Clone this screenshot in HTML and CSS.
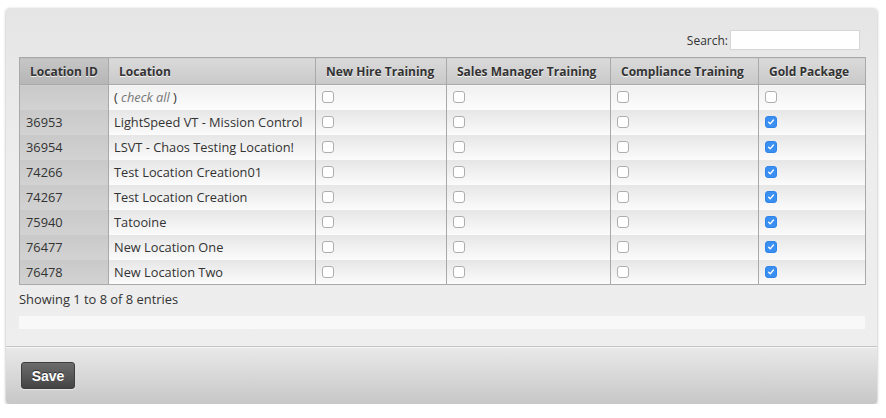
FILE: index.html
```html
<!DOCTYPE html>
<html>
<head>
<meta charset="utf-8">
<link rel="stylesheet" href="styles.css">
</head>
<body>
<div class="panel">
  <div class="panel-body">
    <div class="search-row">
      <label class="search-label">Search:<input class="search-input" type="text"></label>
    </div>
    <table class="grid">
      <colgroup>
        <col class="c1"><col class="c2"><col class="c3"><col class="c4"><col class="c5"><col class="c6">
      </colgroup>
      <thead>
        <tr>
          <th class="sorted">Location ID</th>
          <th>Location</th>
          <th>New Hire Training</th>
          <th>Sales Manager Training</th>
          <th>Compliance Training</th>
          <th>Gold Package</th>
        </tr>
      </thead>
      <tbody>
        <tr>
          <td class="id"></td>
          <td>( <span class="checkall">check all</span> )</td>
          <td><span class="cb"></span></td>
          <td><span class="cb"></span></td>
          <td><span class="cb"></span></td>
          <td><span class="cb"></span></td>
        </tr>
        <tr>
          <td class="id">36953</td><td>LightSpeed VT - Mission Control</td>
          <td><span class="cb"></span></td><td><span class="cb"></span></td><td><span class="cb"></span></td>
          <td><span class="cb on"><svg viewBox="0 0 12 12"><path d="M3.2 6.3 L5.1 8.2 L8.9 3.6" fill="none" stroke="#fff" stroke-width="1.6" stroke-linecap="round" stroke-linejoin="round"/></svg></span></td>
        </tr>
        <tr>
          <td class="id">36954</td><td>LSVT - Chaos Testing Location!</td>
          <td><span class="cb"></span></td><td><span class="cb"></span></td><td><span class="cb"></span></td>
          <td><span class="cb on"><svg viewBox="0 0 12 12"><path d="M3.2 6.3 L5.1 8.2 L8.9 3.6" fill="none" stroke="#fff" stroke-width="1.6" stroke-linecap="round" stroke-linejoin="round"/></svg></span></td>
        </tr>
        <tr>
          <td class="id">74266</td><td>Test Location Creation01</td>
          <td><span class="cb"></span></td><td><span class="cb"></span></td><td><span class="cb"></span></td>
          <td><span class="cb on"><svg viewBox="0 0 12 12"><path d="M3.2 6.3 L5.1 8.2 L8.9 3.6" fill="none" stroke="#fff" stroke-width="1.6" stroke-linecap="round" stroke-linejoin="round"/></svg></span></td>
        </tr>
        <tr>
          <td class="id">74267</td><td>Test Location Creation</td>
          <td><span class="cb"></span></td><td><span class="cb"></span></td><td><span class="cb"></span></td>
          <td><span class="cb on"><svg viewBox="0 0 12 12"><path d="M3.2 6.3 L5.1 8.2 L8.9 3.6" fill="none" stroke="#fff" stroke-width="1.6" stroke-linecap="round" stroke-linejoin="round"/></svg></span></td>
        </tr>
        <tr>
          <td class="id">75940</td><td>Tatooine</td>
          <td><span class="cb"></span></td><td><span class="cb"></span></td><td><span class="cb"></span></td>
          <td><span class="cb on"><svg viewBox="0 0 12 12"><path d="M3.2 6.3 L5.1 8.2 L8.9 3.6" fill="none" stroke="#fff" stroke-width="1.6" stroke-linecap="round" stroke-linejoin="round"/></svg></span></td>
        </tr>
        <tr>
          <td class="id">76477</td><td>New Location One</td>
          <td><span class="cb"></span></td><td><span class="cb"></span></td><td><span class="cb"></span></td>
          <td><span class="cb on"><svg viewBox="0 0 12 12"><path d="M3.2 6.3 L5.1 8.2 L8.9 3.6" fill="none" stroke="#fff" stroke-width="1.6" stroke-linecap="round" stroke-linejoin="round"/></svg></span></td>
        </tr>
        <tr>
          <td class="id">76478</td><td>New Location Two</td>
          <td><span class="cb"></span></td><td><span class="cb"></span></td><td><span class="cb"></span></td>
          <td><span class="cb on"><svg viewBox="0 0 12 12"><path d="M3.2 6.3 L5.1 8.2 L8.9 3.6" fill="none" stroke="#fff" stroke-width="1.6" stroke-linecap="round" stroke-linejoin="round"/></svg></span></td>
        </tr>
      </tbody>
    </table>
    <div class="info">Showing 1 to 8 of 8 entries</div>
    <div class="pager-bar"></div>
  </div>
  <div class="panel-footer">
    <button class="btn-save" type="button">Save</button>
  </div>
</div>
</body>
</html>
```
FILE: styles.css
```css
* { box-sizing: border-box; }
html, body { margin: 0; padding: 0; background: #fff; }
body {
  font-family: "Open Sans", "DejaVu Sans", sans-serif;
  font-size: 12px;
  color: #333;
  padding: 8px 9px 0 6px;
}
.panel {
  width: 871px;
  border-radius: 4px;
  background: linear-gradient(#e5e5e5, #ededed 40%, #eeeeee);
  box-shadow: 0 1px 3px rgba(0,0,0,0.35);
  overflow: hidden;
}
.panel-body {
  padding: 22px 12px 0 13px;
}
.search-row {
  display: flex;
  justify-content: flex-end;
  height: 20px;
  margin-bottom: 7px;
}
.search-label {
  display: flex;
  align-items: center;
  color: #333;
  font-size: 12px;
  padding-right: 5px;
}
.search-input {
  width: 130px;
  height: 20px;
  margin: 0 0 0 2px;
  border: 1px solid #d6d6d6;
  background: #fff;
  padding: 0 3px;
  outline: none;
}
.grid {
  width: 846px;
  border-collapse: collapse;
  table-layout: fixed;
  border: 1px solid #a9a9a9;
}
.c1 { width: 89px; }
.c2 { width: 207px; }
.c3 { width: 131px; }
.c4 { width: 164px; }
.c5 { width: 148px; }
.c6 { width: 107px; }
.grid th {
  height: 27px;
  padding: 0 10px;
  text-align: left;
  font-weight: 700;
  font-size: 12px;
  color: #333;
  text-shadow: 0 1px 0 rgba(255,255,255,0.8);
  background: linear-gradient(#dadada, #c9c9c9);
  border: 1px solid #a9a9a9;
  white-space: nowrap;
}
.grid th.sorted {
  background: linear-gradient(#c6c6c6, #b6b6b6);
}
.grid td {
  height: 25px;
  padding: 0 6px 0 5px;
  font-size: 12.8px;
  color: #333;
  background: linear-gradient(#e6e6e6, #fbfbfb);
  border-left: 1px solid #a9a9a9;
  border-right: 1px solid #a9a9a9;
  white-space: nowrap;
  vertical-align: middle;
}
.grid td .cb { margin-left: 1px; }
.grid tbody tr:first-child td {
  background: linear-gradient(#f0f0f0, #fdfdfd);
}
.grid td.id,
.grid tbody tr:first-child td.id {
  background: linear-gradient(#c9c9c9, #d2d2d2);
  padding-left: 6px;
}
.checkall {
  font-style: italic;
  color: #777;
}
.cb {
  display: block;
  width: 12px;
  height: 12px;
  border: 1px solid #aeaeae;
  border-radius: 3px;
  background: #fff;
}
.cb.on {
  border-color: #2f84ea;
  background: #3a8ff3;
}
.cb svg {
  display: block;
  width: 10px;
  height: 10px;
}
.info {
  margin-top: 5px;
  height: 18px;
  line-height: 18px;
  font-size: 12.9px;
  color: #333;
}
.pager-bar {
  margin-top: 8px;
  height: 13px;
  background: #f8f8f8;
  margin-bottom: 17px;
}
.panel-footer {
  border-top: 1px solid #c4c4c4;
  box-shadow: inset 0 1px 0 #f6f6f6;
  background: linear-gradient(#e9e9e9, #c7c7c7);
  padding: 15px 0 15px 15px;
  height: 58px;
}
.btn-save {
  width: 54px;
  height: 27px;
  border: 1px solid #3e3e3e;
  border-radius: 3px;
  background: linear-gradient(#6c6c6c, #444444);
  color: #fff;
  font-family: "Liberation Sans", Arial, sans-serif;
  font-weight: 700;
  font-size: 14px;
  text-shadow: 0 -1px 0 rgba(0,0,0,0.5);
  box-shadow: 0 1px 1px rgba(255,255,255,0.5);
  padding: 0;
  cursor: pointer;
}
```
